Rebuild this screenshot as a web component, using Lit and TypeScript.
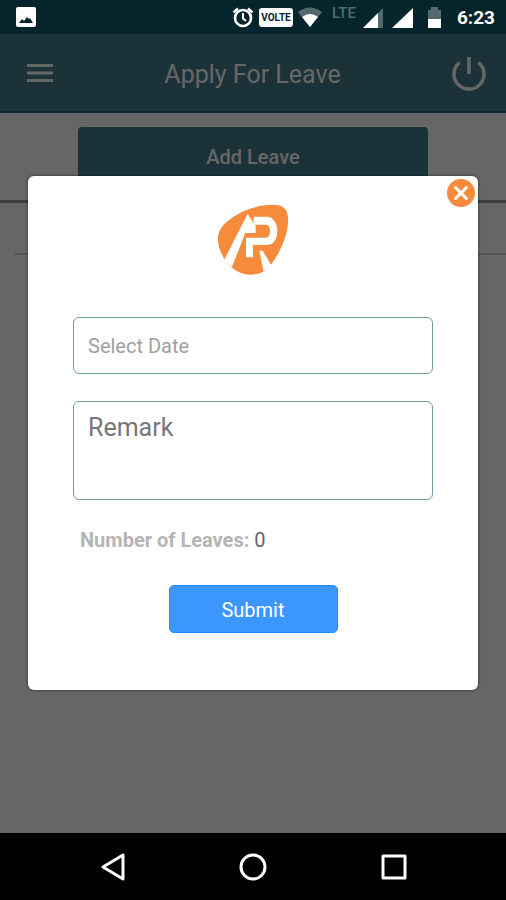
import { LitElement, html, css } from "lit";
import { customElement } from "lit/decorators.js";

@customElement("status-bar")
class StatusBar extends LitElement {
  static styles = css`
    :host {
      display: flex;
      align-items: center;
      justify-content: space-between;
      height: 34px;
      padding: 0 11px 0 16px;
      background: #05242b;
      color: #fff;
    }
    .right {
      display: flex;
      align-items: center;
      gap: 14px;
    }
    svg {
      display: block;
    }
    .time {
      font-size: 19px;
      font-weight: 700;
      line-height: 24px;
      padding-top: 2px;
    }
  `;

  render() {
    return html`
      <svg width="20" height="20" viewBox="0 0 20 20" aria-label="Picture saved">
        <rect width="20" height="20" rx="2" fill="#fff" />
        <path d="M3 16 L6 12 L8 14 L11 10 L13 12 L14 11 L17 16 Z" fill="#05242b" />
      </svg>
      <div class="right">
        <svg width="212" height="34" viewBox="0 0 212 34" aria-label="Alarm, network and battery">
          <g fill="none" stroke="#fff">
            <circle cx="12" cy="18" r="8" stroke-width="2.6" />
            <path d="M12 13 V18.500 L15 21" stroke-width="2" />
            <path d="M2.500 12.500 L7 8.500 M21.500 12.500 L17 8.500" stroke-width="2.400" />
          </g>
          <rect x="28" y="8" width="34" height="19" rx="3" fill="#fff" />
          <text x="45" y="21" text-anchor="middle" font-size="10" font-weight="700" fill="#05242b">VOLTE</text>
          <path d="M67 12 Q79 3 91 12 L79 27 Z" fill="#536a6e" />
          <path d="M71 17 Q79 11 87 17 L79 27 Z" fill="#fff" />
          <text x="101" y="18" font-size="15" font-weight="500" fill="#536a6e">LTE</text>
          <path d="M132 28 L152 8 V28 Z" fill="#536a6e" />
          <path d="M132 28 L147 13 V28 Z" fill="#fff" />
          <path d="M161 28 L182 8 V28 Z" fill="#fff" />
          <path d="M197 10 H200 V7 H207 V10 H210 V28 H197 Z" fill="#536a6e" />
          <path d="M197 19 H210 V28 H197 Z" fill="#fff" />
        </svg>
        <span class="time">6:23</span>
      </div>
    `;
  }
}

@customElement("leave-page")
class LeavePage extends LitElement {
  static styles = css`
    :host {
      display: block;
    }
    header {
      display: flex;
      align-items: center;
      justify-content: space-between;
      height: 79px;
      box-sizing: border-box;
      padding: 0 19px 0 26px;
      background: #44808c;
      border-bottom: 2px solid #106a7a;
      color: #fff;
    }
    h1 {
      margin: 0;
      font-size: 25px;
      font-weight: 400;
      line-height: 32px;
      padding-top: 4px;
    }
    button {
      font: inherit;
      border: 0;
      padding: 0;
      background: none;
      color: inherit;
    }
    svg {
      display: block;
    }
    .action {
      display: flex;
      justify-content: center;
      padding: 14px 78px;
      border-bottom: 3px solid #999;
    }
    .add {
      flex: 1;
      height: 59px;
      border-radius: 4px;
      background: #44808c;
      color: #fff;
      font-size: 20px;
      font-weight: 500;
    }
    .divider {
      margin: 50px 0 0 15px;
      border: 0;
      border-top: 2px solid #d0d0d0;
    }
  `;

  render() {
    return html`
      <header>
        <button aria-label="Menu">
          <svg width="28" height="34" viewBox="0 0 28 34">
            <path d="M1 9.500 H27 M1 17 H27 M1 24.500 H27" stroke="#fff" stroke-width="3" />
          </svg>
        </button>
        <h1>Apply For Leave</h1>
        <button aria-label="Log out">
          <svg width="36" height="36" viewBox="0 0 36 36" fill="none" stroke="#fff" stroke-width="3.500">
            <path d="M8.500 7.500 A15 15 0 1 0 27.500 7.500" />
            <path d="M18 2 V19" />
          </svg>
        </button>
      </header>
      <div class="action"><button class="add">Add Leave</button></div>
      <hr class="divider" />
    `;
  }
}

@customElement("leave-dialog")
class LeaveDialog extends LitElement {
  static styles = css`
    :host {
      position: relative;
      display: block;
      width: 100%;
    }
    form {
      display: flex;
      flex-direction: column;
      align-items: center;
      padding: 28px 45px 57px;
      border-radius: 6px;
      background: #fff;
      box-shadow: 0 0 3px rgba(0, 0, 0, 0.6);
    }
    .close {
      position: absolute;
      top: 3px;
      right: 3px;
      padding: 0;
      border: 0;
      background: none;
    }
    svg {
      display: block;
    }
    .field {
      display: block;
      box-sizing: border-box;
      width: 100%;
      margin: 0;
      padding: 2px 14px 0;
      border: 1px solid #6d9ba0;
      border-radius: 6px;
      background: #fff;
      font-family: inherit;
      color: #555;
      resize: none;
      outline: none;
    }
    .date {
      height: 57px;
      margin-top: 41px;
      font-size: 20px;
    }
    .date::placeholder {
      color: #a0a0a0;
    }
    .remark {
      height: 99px;
      margin-top: 27px;
      padding-top: 10px;
      font-size: 25px;
      line-height: 32px;
    }
    .remark::placeholder {
      color: #777;
    }
    .count {
      align-self: flex-start;
      margin: 28px 0 33px;
      padding-left: 7px;
      font-size: 20px;
      line-height: 24px;
      color: #666;
    }
    .count b {
      color: #b5b5b5;
    }
    .submit {
      width: 169px;
      height: 48px;
      padding: 2px 0 0;
      border: 1px solid #1e8bff;
      border-radius: 5px;
      background: #3b97ff;
      color: #fff;
      font-family: inherit;
      font-size: 20px;
    }
  `;

  render() {
    return html`
      <form role="dialog" aria-label="Apply for leave" @submit=${(e: Event) => e.preventDefault()}>
        <svg width="72" height="72" viewBox="53 42 216 216" aria-label="AP logo">
          <path
            d="M56 152 C55 122 68 105 100 82 C140 54 190 42 232 45 C260 48 268 68 266 98 C263 145 240 190 214 226 C192 254 160 258 132 251 C92 241 58 192 56 152 Z"
            fill="#f68b3c"
          />
          <g fill="#fff">
            <path d="M145 71 L169 108 V129 H138 L98 231 L74 211 Z" />
            <path d="M163 80 H202 C222 80 234 99 234 122 C234 149 222 165 202 165 H161 V202 H140 V143 H200 C208 143 212 133 212 123 C212 112 208 104 200 104 H163 Z" />
            <path d="M180 182 H190 L216 226 L193 246 Z" />
          </g>
        </svg>
        <input class="field date" type="text" placeholder="Select Date" aria-label="Select Date" />
        <textarea class="field remark" placeholder="Remark" aria-label="Remark"></textarea>
        <p class="count"><b>Number of Leaves:</b> 0</p>
        <button class="submit" type="submit">Submit</button>
      </form>
      <button class="close" aria-label="Close">
        <svg width="28" height="28" viewBox="0 0 28 28">
          <circle cx="14" cy="14" r="14" fill="#f68b3c" />
          <path d="M8.500 8.500 L19.500 19.500 M19.500 8.500 L8.500 19.500" stroke="#fff" stroke-width="3" stroke-linecap="round" />
        </svg>
      </button>
    `;
  }
}

@customElement("nav-keys")
class NavKeys extends LitElement {
  static styles = css`
    :host {
      display: flex;
      align-items: center;
      justify-content: space-between;
      height: 67px;
      padding: 0 98px;
      background: #000;
    }
    button {
      padding: 0;
      border: 0;
      background: none;
    }
    svg {
      display: block;
      fill: none;
      stroke: #fff;
      stroke-width: 3;
      stroke-linejoin: round;
    }
  `;

  render() {
    return html`
      <button aria-label="Back">
        <svg width="28" height="28" viewBox="0 0 28 28"><path d="M25 2 V26 L5 14 Z" /></svg>
      </button>
      <button aria-label="Home">
        <svg width="28" height="28" viewBox="0 0 28 28"><circle cx="14" cy="14" r="12" /></svg>
      </button>
      <button aria-label="Recent apps">
        <svg width="28" height="28" viewBox="0 0 28 28"><rect x="3" y="3" width="22" height="22" /></svg>
      </button>
    `;
  }
}

@customElement("app-root")
class AppRoot extends LitElement {
  static styles = css`
    :host {
      display: flex;
      flex-direction: column;
      min-height: 100vh;
      font-family: Roboto, "Liberation Sans", sans-serif;
    }
    .stage {
      flex: 1;
      display: grid;
      background: #fff;
    }
    leave-page,
    .scrim {
      grid-area: 1 / 1;
      min-width: 0;
    }
    .scrim {
      position: relative;
      display: flex;
      align-items: center;
      padding: 0 28px 2px;
      background: rgba(0, 0, 0, 0.6);
    }
  `;

  render() {
    return html`
      <status-bar></status-bar>
      <main class="stage">
        <leave-page></leave-page>
        <div class="scrim"><leave-dialog></leave-dialog></div>
      </main>
      <nav-keys></nav-keys>
    `;
  }
}
